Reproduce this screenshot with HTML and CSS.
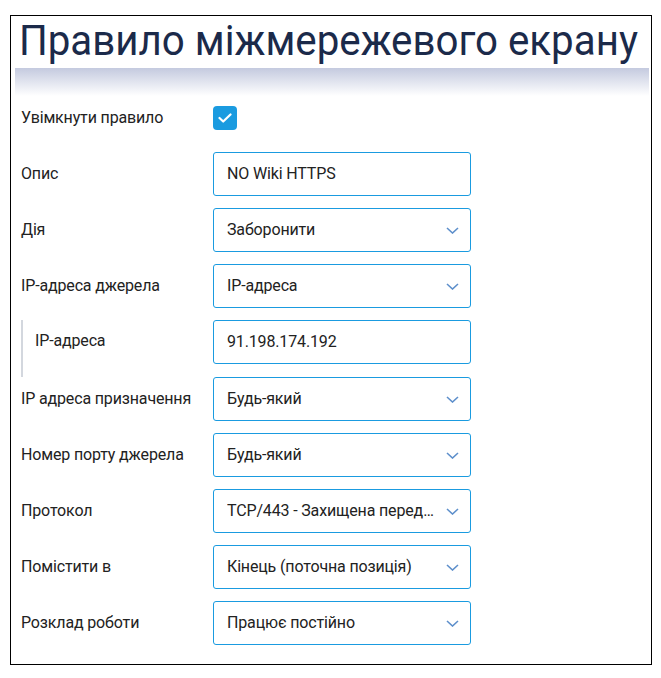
FILE: index.html
```html
<!DOCTYPE html>
<html lang="uk">
<head>
    <meta charset="UTF-8">
    <meta name="viewport" content="width=device-width, initial-scale=1.0">
    <title>Правило міжмережевого екрану</title>
    <link rel="stylesheet" href="styles.css">
</head>
<body>
    <div class="frame">
        <h1 class="title"><span class="title-text">Правило міжмережевого екрану</span></h1>
        <div class="title-shade"></div>

        <form class="rule-form">
            <div class="row">
                <label class="label">Увімкнути правило</label>
                <span class="check">
                    <svg width="14" height="10" viewBox="0 0 14 10"><path d="M1.5 5 L5.2 8.5 L12.5 1.5" fill="none" stroke="#fff" stroke-width="2.2" stroke-linecap="round" stroke-linejoin="round"/></svg>
                </span>
            </div>
            <div class="row">
                <label class="label">Опис</label>
                <div class="field">NO Wiki HTTPS</div>
            </div>
            <div class="row">
                <label class="label">Дія</label>
                <div class="field select"><span class="clip">Заборонити</span><svg class="chev" width="13" height="7" viewBox="0 0 13 7"><path d="M1 1 L6.5 6 L12 1" fill="none" stroke="#5d8fcb" stroke-width="1.6"/></svg></div>
            </div>
            <div class="row">
                <label class="label">IP-адреса джерела</label>
                <div class="field select"><span class="clip">IP-адреса</span><svg class="chev" width="13" height="7" viewBox="0 0 13 7"><path d="M1 1 L6.5 6 L12 1" fill="none" stroke="#5d8fcb" stroke-width="1.6"/></svg></div>
            </div>
            <div class="row sub">
                <label class="label">IP-адреса</label>
                <div class="field">91.198.174.192</div>
            </div>
            <div class="row">
                <label class="label">IP адреса призначення</label>
                <div class="field select"><span class="clip">Будь-який</span><svg class="chev" width="13" height="7" viewBox="0 0 13 7"><path d="M1 1 L6.5 6 L12 1" fill="none" stroke="#5d8fcb" stroke-width="1.6"/></svg></div>
            </div>
            <div class="row">
                <label class="label">Номер порту джерела</label>
                <div class="field select"><span class="clip">Будь-який</span><svg class="chev" width="13" height="7" viewBox="0 0 13 7"><path d="M1 1 L6.5 6 L12 1" fill="none" stroke="#5d8fcb" stroke-width="1.6"/></svg></div>
            </div>
            <div class="row">
                <label class="label">Протокол</label>
                <div class="field select"><span class="clip">TCP/443 - Захищена передача гіпертексту</span><svg class="chev" width="13" height="7" viewBox="0 0 13 7"><path d="M1 1 L6.5 6 L12 1" fill="none" stroke="#5d8fcb" stroke-width="1.6"/></svg></div>
            </div>
            <div class="row">
                <label class="label">Помістити в</label>
                <div class="field select"><span class="clip">Кінець (поточна позиція)</span><svg class="chev" width="13" height="7" viewBox="0 0 13 7"><path d="M1 1 L6.5 6 L12 1" fill="none" stroke="#5d8fcb" stroke-width="1.6"/></svg></div>
            </div>
            <div class="row">
                <label class="label">Розклад роботи</label>
                <div class="field select"><span class="clip">Працює постійно</span><svg class="chev" width="13" height="7" viewBox="0 0 13 7"><path d="M1 1 L6.5 6 L12 1" fill="none" stroke="#5d8fcb" stroke-width="1.6"/></svg></div>
            </div>
        </form>
    </div>
</body>
</html>
```

FILE: styles.css
```css
body {
    margin: 0;
    padding: 15px 0 0 10px;
    background: #fff;
    font-family: Roboto, "Noto Sans", sans-serif;
    color: #222;
}
.frame {
    width: 640px;
    height: 648px;
    border: 1px solid #000;
    box-sizing: content-box;
}
.title {
    margin: 0;
    padding: 0 0 0 8px;
    height: 52px;
    line-height: 48px;
    font-size: 43px;
    font-weight: 400;
    color: #1b2a4a;
    white-space: nowrap;
}
.title-text {
    display: inline-block;
    transform: scaleX(0.937);
    transform-origin: left center;
}
.title-shade {
    margin: 0 2px 0 4px;
    height: 28px;
    background: linear-gradient(to bottom, #c4cadf, #ffffff);
}
.rule-form {
    padding: 0 0 0 10px;
}
.row {
    display: flex;
    align-items: center;
    height: 44px;
    margin-bottom: 12px;
}
.row.sub {
    height: 57px;
    align-items: flex-start;
    margin-bottom: 0;
    border-left: 2px solid #d3d7de;
}
.row.sub .label {
    width: 178px;
    padding-left: 12px;
    line-height: 42px;
}
.label {
    width: 192px;
    font-size: 16px;
    letter-spacing: -0.15px;
    padding-bottom: 1px;
    color: #222;
}
.check {
    width: 24px;
    height: 24px;
    border-radius: 4px;
    background: #1a9be0;
    display: flex;
    align-items: center;
    justify-content: center;
}
.field {
    width: 258px;
    height: 44px;
    box-sizing: border-box;
    border: 1px solid #1a9be0;
    border-radius: 3px;
    padding: 0 11px 2px 13px;
    display: flex;
    align-items: center;
    font-size: 16px;
    letter-spacing: -0.15px;
    color: #222;
}
.clip {
    flex: 1;
    min-width: 0;
    overflow: hidden;
    white-space: nowrap;
    text-overflow: ellipsis;
}
.chev {
    flex: none;
    margin: 2px 0 0 7px;
}
```
